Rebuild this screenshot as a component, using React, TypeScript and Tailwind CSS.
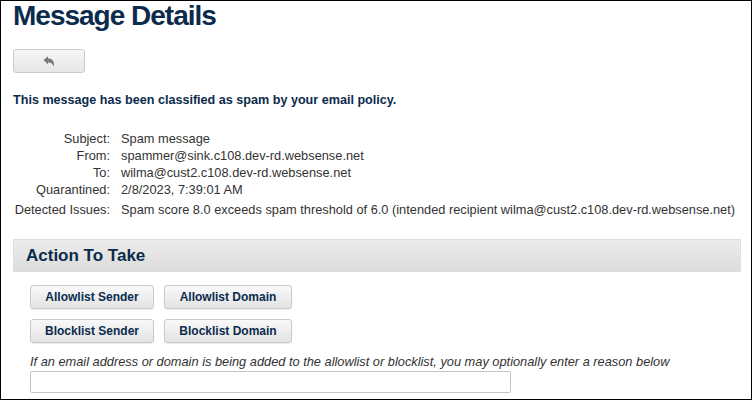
import React from "react";

const ReplyIcon = () => (
  <svg width="12" height="11" viewBox="0 0 12 11" fill="#7a7a7a">
    <path d="M0.5 4 L5 0.3 L5 2.6 C8.5 2.6 11 4.6 11 8.2 C11 9 10.8 9.8 10.6 10.5 C10 8 8.2 6.4 5 6.4 L5 8.6 Z" />
  </svg>
);

const Btn = ({ children, w }: { children: React.ReactNode; w: string }) => (
  <button
    className={`${w} h-[24px] rounded-[3px] border border-[#c9c9c9] bg-gradient-to-b from-[#f9f9f9] to-[#e3e3e3] text-[12px] font-bold text-[#0b2b4c] shadow-[0_1px_1px_rgba(0,0,0,0.08)]`}
  >
    {children}
  </button>
);

const rows: [string, string][] = [
  ["Subject:", "Spam message"],
  ["From:", "spammer@sink.c108.dev-rd.websense.net"],
  ["To:", "wilma@cust2.c108.dev-rd.websense.net"],
  ["Quarantined:", "2/8/2023, 7:39:01 AM"],
  ["Detected Issues:", "Spam score 8.0 exceeds spam threshold of 6.0 (intended recipient wilma@cust2.c108.dev-rd.websense.net)"],
];

export default function App() {
  return (
    <div
      className="w-[752px] h-[400px] border border-black bg-white overflow-hidden pl-[12px] pr-[10px]"
      style={{ fontFamily: '"Liberation Sans", Arial, sans-serif' }}
    >
      <h1 className="text-[28px] leading-[30px] font-bold tracking-[-1px] text-[#0b2b4c]">Message Details</h1>
      <button className="mt-[18px] w-[72px] h-[24px] rounded-[3px] border border-[#cccccc] bg-gradient-to-b from-[#f7f7f7] to-[#e6e6e6] flex items-center justify-center">
        <ReplyIcon />
      </button>
      <p className="mt-[19px] text-[12.6px] leading-[16px] font-bold text-[#0b2b4c]">
        This message has been classified as spam by your email policy.
      </p>
      <div className="mt-[22px] text-[12.8px] text-[#333333]">
        {rows.map(([k, v], i) => (
          <div key={k} className={`flex leading-[17px] whitespace-nowrap ${i === 4 ? "mt-[3px]" : ""}`}>
            <div className="w-[97px] shrink-0 text-right">{k}</div>
            <div className="ml-[11px]">{v}</div>
          </div>
        ))}
      </div>
      <div className="mt-[21px] h-[33px] border border-[#dddddd] bg-gradient-to-b from-[#ececec] to-[#dcdcdc] flex items-center pl-[12px]">
        <span className="text-[17px] font-bold text-[#0b2b4c]">Action To Take</span>
      </div>
      <div className="pl-[17px]">
        <div className="mt-[13px] flex gap-[10px]">
          <Btn w="w-[124px]">Allowlist Sender</Btn>
          <Btn w="w-[128px]">Allowlist Domain</Btn>
        </div>
        <div className="mt-[10px] flex gap-[10px]">
          <Btn w="w-[124px]">Blocklist Sender</Btn>
          <Btn w="w-[128px]">Blocklist Domain</Btn>
        </div>
        <p className="mt-[11px] text-[12.8px] leading-[16px] italic text-[#333333]">
          If an email address or domain is being added to the allowlist or blocklist, you may optionally enter a reason below
        </p>
        <input className="mt-[1px] block w-[481px] h-[22px] rounded-[2px] border border-[#c4c4c4] bg-white" />
      </div>
    </div>
  );
}
